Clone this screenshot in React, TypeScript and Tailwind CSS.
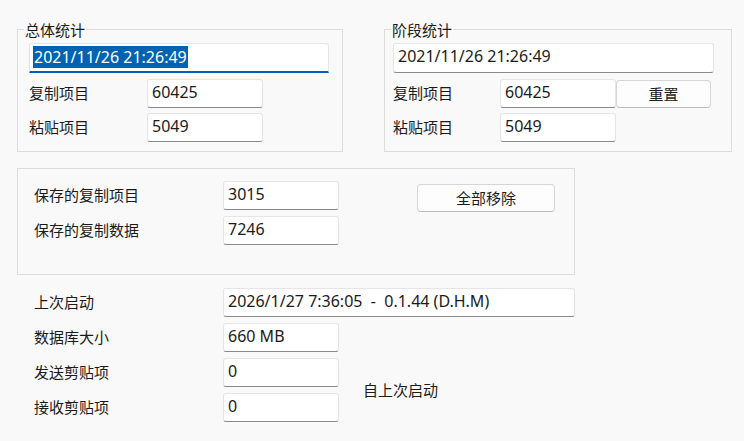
import clsx from 'clsx'

function Field({ value, className }: { value: string; className?: string }) {
  return (
    <div
      className={clsx(
        'h-[29px] rounded-[3px] border border-[#e5e5e5] border-b-[#8a8a8a] bg-white px-[4px] text-[16px] leading-[25px] whitespace-pre',
        className
      )}
    >
      {value}
    </div>
  )
}

function Button({ label, className }: { label: string; className?: string }) {
  return (
    <button
      className={clsx(
        'h-[28px] rounded-[4px] border border-[#d6d6d6] border-b-[#bcbcbc] bg-[#fdfdfd] text-center leading-[24px]',
        className
      )}
    >
      {label}
    </button>
  )
}

function Group({ title, className, children }: { title: string; className?: string; children: React.ReactNode }) {
  return (
    <div className={clsx('relative border border-[#dcdcdc]', className)}>
      <span className="absolute -top-[10px] left-[6px] bg-[#f9f9f9] px-[1px] leading-[20px]">{title}</span>
      {children}
    </div>
  )
}

export default function App() {
  return (
    <div className="h-[441px] w-[744px] overflow-hidden bg-[#f9f9f9] text-[15px] text-[#1b1b1b] font-['Noto_Sans','Noto_Sans_CJK_SC',sans-serif]">
      <div className="mt-[29px] flex items-start">
        <Group title="总体统计" className="ml-[17px] h-[123px] w-[326px] pl-[11px] pt-[13px]">
          <div className="h-[30px] w-[300px] rounded-t-[3px] border border-[#e5e5e5] border-b-2 border-b-[#005fb8] bg-white pl-[3px] pt-[3px] text-[16px] leading-[20px]">
            <span className="bg-[#0063b1] px-[1px] text-white">2021/11/26 21:26:49</span>
          </div>
          <div className="mt-[6px] grid grid-cols-[118px_116px] items-center gap-y-[5px]">
            <span>复制项目</span>
            <Field value="60425" />
            <span>粘贴项目</span>
            <Field value="5049" />
          </div>
        </Group>

        <Group title="阶段统计" className="ml-[41px] h-[123px] w-[348px] pl-[8px] pt-[13px]">
          <Field value="2021/11/26 21:26:49" className="h-[30px] w-[321px]" />
          <div className="mt-[6px] grid grid-cols-[107px_116px_95px] items-center gap-y-[5px]">
            <span>复制项目</span>
            <Field value="60425" />
            <Button label="重置" />
            <span>粘贴项目</span>
            <Field value="5049" />
            <span />
          </div>
        </Group>
      </div>

      <div className="ml-[17px] mt-[16px] flex h-[107px] w-[558px] items-start border border-[#dcdcdc] pl-[16px] pt-[12px]">
        <div className="grid grid-cols-[189px_116px] items-center gap-y-[6px]">
          <span>保存的复制项目</span>
          <Field value="3015" />
          <span>保存的复制数据</span>
          <Field value="7246" />
        </div>
        <Button label="全部移除" className="ml-[78px] mt-[3px] w-[138px]" />
      </div>

      <div className="ml-[34px] mt-[13px] grid grid-cols-[189px_116px_236px] items-center gap-y-[6px]">
        <span>上次启动</span>
        <Field value="2026/1/27 7:36:05  -  0.1.44 (D.H.M)" className="col-span-2" />
        <span>数据库大小</span>
        <Field value="660 MB" />
        <span />
        <span>发送剪贴项</span>
        <Field value="0" />
        <span className="row-span-2 pl-[24px]">自上次启动</span>
        <span>接收剪贴项</span>
        <Field value="0" />
      </div>
    </div>
  )
}
